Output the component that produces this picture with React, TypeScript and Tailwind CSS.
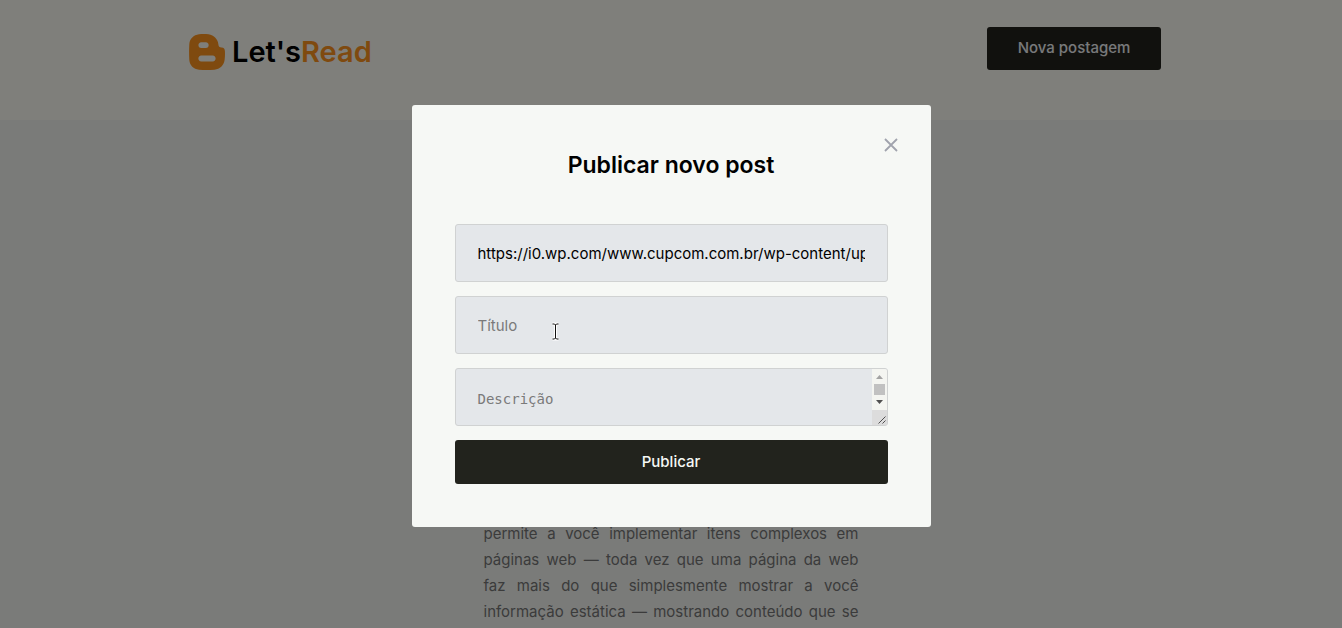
import React from 'react';

const paragraph = [
  'permite a você implementar itens complexos em',
  'páginas web — toda vez que uma página da web',
  'faz mais do que simplesmente mostrar a você',
  'informação estática — mostrando conteúdo que se',
];

const imageUrl = 'https://i0.wp.com/www.cupcom.com.br/wp-content/uploads/2021/06/javascript.png';

function BloggerLogo() {
  return (
    <svg width="36" height="36" viewBox="0 0 36 36" className="text-[#ff951f]" aria-hidden="true">
      <path
        fill="currentColor"
        fillRule="evenodd"
        d="M10 .3C13 0 16.500 0 19.500.3C25 1 29 5.500 29.400 10.500C29.500 12.600 30.500 13.200 32.500 13.400C35 13.600 35.700 14.500 35.900 17C36.100 20 36 23 35.600 26C34.800 31.500 31 35.200 25.500 35.700C20 36.100 15 36.100 10 35.700C4.500 35 .8 31.500.3 26C0 20.500 0 15.500.3 10C.8 4.800 4.500 1 10 .3ZM12.300 8.300C8.500 8.300 8.500 14 12.300 14H16.800C20.600 14 20.600 8.300 16.800 8.300ZM12.300 21.600C8.400 21.600 8.400 27.600 12.300 27.600H23.700C27.600 27.600 27.600 21.600 23.700 21.600Z"
      />
    </svg>
  );
}

function Header() {
  return (
    <header className="h-[120px] bg-[#fffef6]">
      <div className="mx-auto flex max-w-[980px] items-start justify-between pt-[27px]">
        <a href="#" className="flex items-center pl-2 pt-[3px] text-[29px] font-semibold leading-[43px]">
          <BloggerLogo />
          <span className="ml-[7px] text-black">Let's</span>
          <span className="text-[#ff951f]">Read</span>
        </a>
        <button type="button" className="h-[43px] w-[174px] rounded-[3px] bg-[#22231d] text-[15px] font-medium text-[#f0f2f5]">
          Nova postagem
        </button>
      </div>
    </header>
  );
}

function Scrollbar() {
  return (
    <svg width="15" height="56" viewBox="0 0 15 56" className="shrink-0" aria-hidden="true">
      <rect width="15" height="41" fill="#f4f5f1" />
      <rect y="41" width="15" height="15" fill="#dcdcdc" />
      <path d="M4 10h7L7.500 6z" fill="#a3a3a3" />
      <rect x="2" y="15" width="11" height="11" fill="#c1c1c1" />
      <path d="M4 31h7l-3.500 4z" fill="#505050" />
      <path d="M6.500 54.500l7-7M10.500 54.500l3-3" stroke="#505050" strokeWidth="1" />
    </svg>
  );
}

function PointerMark() {
  return (
    <svg className="pointer-events-none absolute left-[96px] top-[26px]" width="9" height="19" viewBox="0 0 9 19" fill="none" aria-hidden="true">
      <path d="M1.500 2h2l1 1 1-1h2M4.500 3v13M1.500 17h2l1-1 1 1h2" stroke="#fff" strokeWidth="3" />
      <path d="M1.500 2h2l1 1 1-1h2M4.500 3v13M1.500 17h2l1-1 1 1h2" stroke="#111" strokeWidth="1" />
    </svg>
  );
}

const field =
  'block h-[58px] w-full rounded-[3px] border border-[#d0d2d2] bg-[#e4e7ea] px-[22px] text-[15px] text-black outline-none placeholder:text-[#7a7a7a]';

function PostDialog() {
  return (
    <div className="fixed inset-0 flex items-center justify-center bg-black/50 pt-1">
      <section role="dialog" aria-modal="true" aria-labelledby="dialog-title" className="relative w-full max-w-[519px] rounded-[3px] bg-[#f6f8f5] p-[43px]">
        <button type="button" aria-label="Fechar" className="absolute right-[33px] top-[33px] text-[#a0a3ad]">
          <svg width="14" height="14" viewBox="0 0 14 14" fill="none" stroke="currentColor" strokeWidth="1.8" aria-hidden="true">
            <path d="M1 1l12 12M13 1L1 13" />
          </svg>
        </button>
        <h2 id="dialog-title" className="mb-[42px] text-center text-[23px] font-semibold leading-[34px] text-black">
          Publicar novo post
        </h2>
        <form className="flex flex-col gap-[14px]" onSubmit={(e) => e.preventDefault()}>
          <input aria-label="Imagem" className={field} type="text" defaultValue={imageUrl} />
          <div className="relative">
            <input aria-label="Título" className={field} type="text" placeholder="Título" />
            <PointerMark />
          </div>
          <div className="flex h-[58px] overflow-hidden rounded-[3px] border border-[#d0d2d2] bg-[#e4e7ea]">
            <textarea
              aria-label="Descrição"
              placeholder="Descrição"
              className="h-full min-w-0 flex-1 resize-none overflow-hidden bg-transparent px-[22px] pt-[22px] font-['DejaVu_Sans_Mono',monospace] text-[14px] leading-4 outline-none placeholder:text-[#7a7a7a]"
            />
            <Scrollbar />
          </div>
          <button type="submit" className="h-11 rounded-[3px] bg-[#22231d] text-[15px] font-medium text-[#f6f8f5]">
            Publicar
          </button>
        </form>
      </section>
    </div>
  );
}

export default function App() {
  return (
    <div className="h-screen overflow-hidden bg-[#f4f7f3] font-['Inter',sans-serif]">
      <Header />
      <main className="mx-auto max-w-[375px] pt-[401px] text-[15px] leading-[26px] text-[#777]">
        <p>
          {paragraph.map((line) => (
            <span key={line} className="block whitespace-nowrap text-justify [text-align-last:justify]">
              {line}
            </span>
          ))}
        </p>
      </main>
      <PostDialog />
    </div>
  );
}
